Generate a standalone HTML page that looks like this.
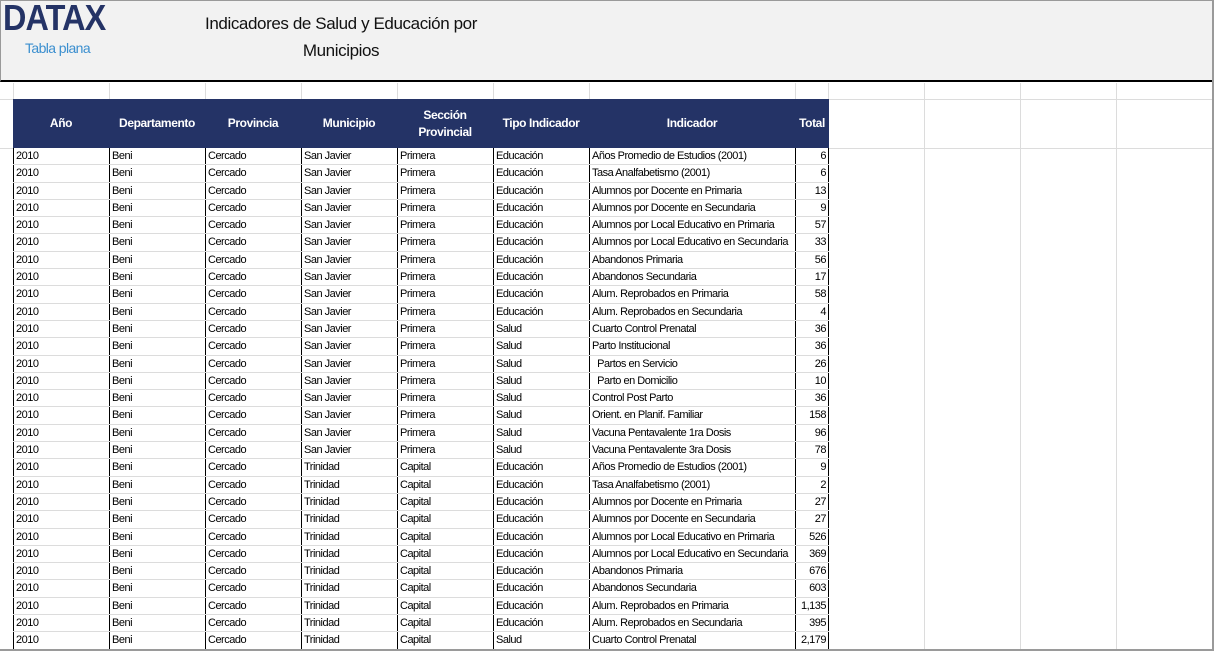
<!DOCTYPE html>
<html><head><meta charset="utf-8"><style>
*{margin:0;padding:0;box-sizing:border-box}
body{width:1214px;height:651px;background:#fff;position:relative;overflow:hidden;font-family:"Liberation Sans",sans-serif}
.top{position:absolute;left:0;top:0;width:1214px;height:82px;background:#f2f2f2;border:1px solid #9a9a9a;border-bottom:2px solid #000}
.logo{position:absolute;left:2px;top:-4px;font-size:36px;font-weight:bold;color:#243366;letter-spacing:-1px;transform:scaleX(0.9);transform-origin:left}
.sub{position:absolute;left:24px;top:39px;font-size:14px;color:#3b8fcf;letter-spacing:-0.6px}
.title{position:absolute;left:195px;top:9px;width:290px;text-align:center;font-size:17px;line-height:27px;color:#111;letter-spacing:-0.4px}
.vl{position:absolute;top:83px;width:1px;height:566px;background:#dcdcdc}
.hl{position:absolute;left:0;width:1212px;height:1px;background:#dcdcdc}
.hdr{position:absolute;left:13px;top:99px;width:816px;height:49px;background:#243366;display:flex}
.hdr div{color:#fff;font-weight:bold;font-size:12px;display:flex;align-items:center;justify-content:center;text-align:center;line-height:17px;letter-spacing:-0.4px}
.rows{position:absolute;left:13px;top:148px;width:816px}
.r{height:17.3px;display:flex;border-bottom:1px solid #dcdcdc;font-size:11px;letter-spacing:-0.5px;color:#000;line-height:17px;background:#fff}
.r div{border-left:1px solid #000;padding-left:2px;white-space:nowrap;overflow:hidden}
.r div:last-child{border-right:1px solid #000;text-align:right;padding-right:2px}
.c1{width:96px}.c7{width:206px}.c8{width:34px}
.bot{position:absolute;left:0;top:649px;width:1214px;height:2px;background:#9a9a9a}
.rb{position:absolute;left:1212px;top:0;width:2px;height:651px;background:#9a9a9a}
</style></head><body>
<div class="top"><div class="logo">DATAX</div><div class="sub">Tabla plana</div>
<div class="title">Indicadores de Salud y Educación por Municipios</div></div>
<div class="vl" style="left:13px"></div><div class="vl" style="left:109px"></div><div class="vl" style="left:205px"></div><div class="vl" style="left:301px"></div><div class="vl" style="left:397px"></div><div class="vl" style="left:493px"></div><div class="vl" style="left:589px"></div><div class="vl" style="left:795px"></div><div class="vl" style="left:828px"></div><div class="vl" style="left:924px"></div><div class="vl" style="left:1020px"></div><div class="vl" style="left:1116px"></div>
<div class="hl" style="top:99px"></div><div class="hl" style="top:148px"></div>
<div class="hdr"><div class="c1">Año</div><div class="c1">Departamento</div><div class="c1">Provincia</div><div class="c1">Municipio</div><div class="c1">Sección<br>Provincial</div><div class="c1">Tipo Indicador</div><div class="c7">Indicador</div><div class="c8">Total</div></div>
<div class="rows">
<div class="r"><div class="c1">2010</div><div class="c1">Beni</div><div class="c1">Cercado</div><div class="c1">San Javier</div><div class="c1">Primera</div><div class="c1">Educación</div><div class="c7">Años Promedio de Estudios (2001)</div><div class="c8">6</div></div>
<div class="r"><div class="c1">2010</div><div class="c1">Beni</div><div class="c1">Cercado</div><div class="c1">San Javier</div><div class="c1">Primera</div><div class="c1">Educación</div><div class="c7">Tasa Analfabetismo (2001)</div><div class="c8">6</div></div>
<div class="r"><div class="c1">2010</div><div class="c1">Beni</div><div class="c1">Cercado</div><div class="c1">San Javier</div><div class="c1">Primera</div><div class="c1">Educación</div><div class="c7">Alumnos por Docente en Primaria</div><div class="c8">13</div></div>
<div class="r"><div class="c1">2010</div><div class="c1">Beni</div><div class="c1">Cercado</div><div class="c1">San Javier</div><div class="c1">Primera</div><div class="c1">Educación</div><div class="c7">Alumnos por Docente en Secundaria</div><div class="c8">9</div></div>
<div class="r"><div class="c1">2010</div><div class="c1">Beni</div><div class="c1">Cercado</div><div class="c1">San Javier</div><div class="c1">Primera</div><div class="c1">Educación</div><div class="c7">Alumnos por Local Educativo en Primaria</div><div class="c8">57</div></div>
<div class="r"><div class="c1">2010</div><div class="c1">Beni</div><div class="c1">Cercado</div><div class="c1">San Javier</div><div class="c1">Primera</div><div class="c1">Educación</div><div class="c7">Alumnos por Local Educativo en Secundaria</div><div class="c8">33</div></div>
<div class="r"><div class="c1">2010</div><div class="c1">Beni</div><div class="c1">Cercado</div><div class="c1">San Javier</div><div class="c1">Primera</div><div class="c1">Educación</div><div class="c7">Abandonos Primaria</div><div class="c8">56</div></div>
<div class="r"><div class="c1">2010</div><div class="c1">Beni</div><div class="c1">Cercado</div><div class="c1">San Javier</div><div class="c1">Primera</div><div class="c1">Educación</div><div class="c7">Abandonos Secundaria</div><div class="c8">17</div></div>
<div class="r"><div class="c1">2010</div><div class="c1">Beni</div><div class="c1">Cercado</div><div class="c1">San Javier</div><div class="c1">Primera</div><div class="c1">Educación</div><div class="c7">Alum. Reprobados en Primaria</div><div class="c8">58</div></div>
<div class="r"><div class="c1">2010</div><div class="c1">Beni</div><div class="c1">Cercado</div><div class="c1">San Javier</div><div class="c1">Primera</div><div class="c1">Educación</div><div class="c7">Alum. Reprobados en Secundaria</div><div class="c8">4</div></div>
<div class="r"><div class="c1">2010</div><div class="c1">Beni</div><div class="c1">Cercado</div><div class="c1">San Javier</div><div class="c1">Primera</div><div class="c1">Salud</div><div class="c7">Cuarto Control Prenatal</div><div class="c8">36</div></div>
<div class="r"><div class="c1">2010</div><div class="c1">Beni</div><div class="c1">Cercado</div><div class="c1">San Javier</div><div class="c1">Primera</div><div class="c1">Salud</div><div class="c7">Parto Institucional</div><div class="c8">36</div></div>
<div class="r"><div class="c1">2010</div><div class="c1">Beni</div><div class="c1">Cercado</div><div class="c1">San Javier</div><div class="c1">Primera</div><div class="c1">Salud</div><div class="c7">&nbsp;&nbsp;Partos en Servicio</div><div class="c8">26</div></div>
<div class="r"><div class="c1">2010</div><div class="c1">Beni</div><div class="c1">Cercado</div><div class="c1">San Javier</div><div class="c1">Primera</div><div class="c1">Salud</div><div class="c7">&nbsp;&nbsp;Parto en Domicilio</div><div class="c8">10</div></div>
<div class="r"><div class="c1">2010</div><div class="c1">Beni</div><div class="c1">Cercado</div><div class="c1">San Javier</div><div class="c1">Primera</div><div class="c1">Salud</div><div class="c7">Control Post Parto</div><div class="c8">36</div></div>
<div class="r"><div class="c1">2010</div><div class="c1">Beni</div><div class="c1">Cercado</div><div class="c1">San Javier</div><div class="c1">Primera</div><div class="c1">Salud</div><div class="c7">Orient. en Planif. Familiar</div><div class="c8">158</div></div>
<div class="r"><div class="c1">2010</div><div class="c1">Beni</div><div class="c1">Cercado</div><div class="c1">San Javier</div><div class="c1">Primera</div><div class="c1">Salud</div><div class="c7">Vacuna Pentavalente 1ra Dosis</div><div class="c8">96</div></div>
<div class="r"><div class="c1">2010</div><div class="c1">Beni</div><div class="c1">Cercado</div><div class="c1">San Javier</div><div class="c1">Primera</div><div class="c1">Salud</div><div class="c7">Vacuna Pentavalente 3ra Dosis</div><div class="c8">78</div></div>
<div class="r"><div class="c1">2010</div><div class="c1">Beni</div><div class="c1">Cercado</div><div class="c1">Trinidad</div><div class="c1">Capital</div><div class="c1">Educación</div><div class="c7">Años Promedio de Estudios (2001)</div><div class="c8">9</div></div>
<div class="r"><div class="c1">2010</div><div class="c1">Beni</div><div class="c1">Cercado</div><div class="c1">Trinidad</div><div class="c1">Capital</div><div class="c1">Educación</div><div class="c7">Tasa Analfabetismo (2001)</div><div class="c8">2</div></div>
<div class="r"><div class="c1">2010</div><div class="c1">Beni</div><div class="c1">Cercado</div><div class="c1">Trinidad</div><div class="c1">Capital</div><div class="c1">Educación</div><div class="c7">Alumnos por Docente en Primaria</div><div class="c8">27</div></div>
<div class="r"><div class="c1">2010</div><div class="c1">Beni</div><div class="c1">Cercado</div><div class="c1">Trinidad</div><div class="c1">Capital</div><div class="c1">Educación</div><div class="c7">Alumnos por Docente en Secundaria</div><div class="c8">27</div></div>
<div class="r"><div class="c1">2010</div><div class="c1">Beni</div><div class="c1">Cercado</div><div class="c1">Trinidad</div><div class="c1">Capital</div><div class="c1">Educación</div><div class="c7">Alumnos por Local Educativo en Primaria</div><div class="c8">526</div></div>
<div class="r"><div class="c1">2010</div><div class="c1">Beni</div><div class="c1">Cercado</div><div class="c1">Trinidad</div><div class="c1">Capital</div><div class="c1">Educación</div><div class="c7">Alumnos por Local Educativo en Secundaria</div><div class="c8">369</div></div>
<div class="r"><div class="c1">2010</div><div class="c1">Beni</div><div class="c1">Cercado</div><div class="c1">Trinidad</div><div class="c1">Capital</div><div class="c1">Educación</div><div class="c7">Abandonos Primaria</div><div class="c8">676</div></div>
<div class="r"><div class="c1">2010</div><div class="c1">Beni</div><div class="c1">Cercado</div><div class="c1">Trinidad</div><div class="c1">Capital</div><div class="c1">Educación</div><div class="c7">Abandonos Secundaria</div><div class="c8">603</div></div>
<div class="r"><div class="c1">2010</div><div class="c1">Beni</div><div class="c1">Cercado</div><div class="c1">Trinidad</div><div class="c1">Capital</div><div class="c1">Educación</div><div class="c7">Alum. Reprobados en Primaria</div><div class="c8">1,135</div></div>
<div class="r"><div class="c1">2010</div><div class="c1">Beni</div><div class="c1">Cercado</div><div class="c1">Trinidad</div><div class="c1">Capital</div><div class="c1">Educación</div><div class="c7">Alum. Reprobados en Secundaria</div><div class="c8">395</div></div>
<div class="r"><div class="c1">2010</div><div class="c1">Beni</div><div class="c1">Cercado</div><div class="c1">Trinidad</div><div class="c1">Capital</div><div class="c1">Salud</div><div class="c7">Cuarto Control Prenatal</div><div class="c8">2,179</div></div>
</div>
<div class="bot"></div><div class="rb"></div>
</body></html>
